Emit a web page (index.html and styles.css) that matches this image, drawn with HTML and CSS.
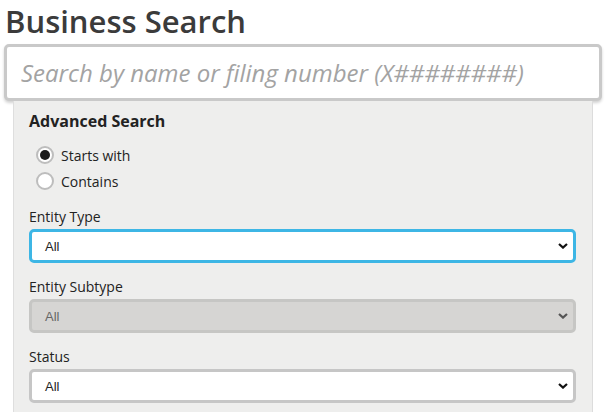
FILE: index.html
```html
<!DOCTYPE html>
<html lang="en">
<head>
<meta charset="utf-8">
<title>Business Search</title>
<link rel="stylesheet" href="styles.css">
</head>
<body>
<div class="page">
  <h1 class="title">Business Search</h1>
  <input class="search" type="text" placeholder="Search by name or filing number (X########)">
  <div class="panel">
    <h2 class="panel-title">Advanced Search</h2>
    <div class="radios">
      <label class="radio"><span class="dot checked"></span><span>Starts with</span></label>
      <label class="radio"><span class="dot"></span><span>Contains</span></label>
    </div>
    <div class="group">
      <div class="label">Entity Type</div>
      <div class="select focus"><span>All</span>
        <svg class="chev" width="10" height="6" viewBox="0 0 10 6"><path d="M1 1 L5 4.6 L9 1" fill="none" stroke="#111" stroke-width="2.2"/></svg>
      </div>
    </div>
    <div class="group">
      <div class="label">Entity Subtype</div>
      <div class="select disabled"><span>All</span>
        <svg class="chev" width="10" height="6" viewBox="0 0 10 6"><path d="M1 1 L5 4.6 L9 1" fill="none" stroke="#555" stroke-width="2.2"/></svg>
      </div>
    </div>
    <div class="group">
      <div class="label">Status</div>
      <div class="select"><span>All</span>
        <svg class="chev" width="10" height="6" viewBox="0 0 10 6"><path d="M1 1 L5 4.6 L9 1" fill="none" stroke="#111" stroke-width="2.2"/></svg>
      </div>
    </div>
  </div>
</div>
</body>
</html>
```

FILE: styles.css
```css
* { box-sizing: border-box; }
html, body { margin: 0; padding: 0; background: #fff; }
body { font-family: "Open Sans", "Noto Sans", sans-serif; color: #222; }
.page { padding: 0 4px; }
.title {
  margin: 0;
  font-size: 31px;
  font-weight: 600;
  line-height: 42px;
  color: #3b3b3b;
  padding-left: 1px;
}
.search {
  display: block;
  width: 100%;
  height: 57px;
  margin-top: 2px;
  border: 3px solid #c9c9c9;
  border-radius: 5px;
  box-shadow: 0 2px 3px rgba(0,0,0,0.18);
  padding: 0 14px;
  font-family: "Open Sans", sans-serif;
  font-style: italic;
  font-size: 24px;
  color: #333;
  background: #fff;
  outline: none;
}
.search::placeholder { color: #a3a3a3; }
.panel {
  margin: 0 9px;
  background: #eeeeed;
  border-left: 1px solid #dedede;
  border-right: 1px solid #dcdcdc;
  padding: 9px 16px 0 15px;
  height: 320px;
}
.panel-title {
  margin: 0;
  font-size: 16px;
  font-weight: 700;
  line-height: 22px;
  color: #222;
}
.radios { margin-top: 10px; }
.radio {
  display: flex;
  align-items: center;
  height: 26px;
  font-size: 14px;
  color: #222;
}
.dot {
  width: 18px;
  height: 18px;
  margin-left: 7px;
  margin-right: 7px;
  border-radius: 50%;
  border: 2px solid #bdbdbd;
  background: #fff;
  position: relative;
}
.dot.checked::after {
  content: "";
  position: absolute;
  left: 2px; top: 2px;
  width: 10px; height: 10px;
  border-radius: 50%;
  background: #1b1b1b;
}
.group { margin-top: 13px; }
.group + .group { margin-top: 14px; }
.label {
  font-size: 14px;
  line-height: 20px;
  color: #222;
  margin-bottom: 2px;
}
.select {
  position: relative;
  display: flex;
  align-items: center;
  height: 34px;
  border: 3px solid #c6c6c6;
  border-radius: 5px;
  background: #fff;
  padding-left: 13px;
  font-family: "Liberation Sans", Arial, sans-serif;
  font-size: 13px;
  color: #222;
}
.select.focus { border-color: #3db6e5; }
.select.disabled { background: #d6d5d3; border-color: #c6c6c4; color: #666; }
.chev { position: absolute; right: 5px; top: 11px; }
```
